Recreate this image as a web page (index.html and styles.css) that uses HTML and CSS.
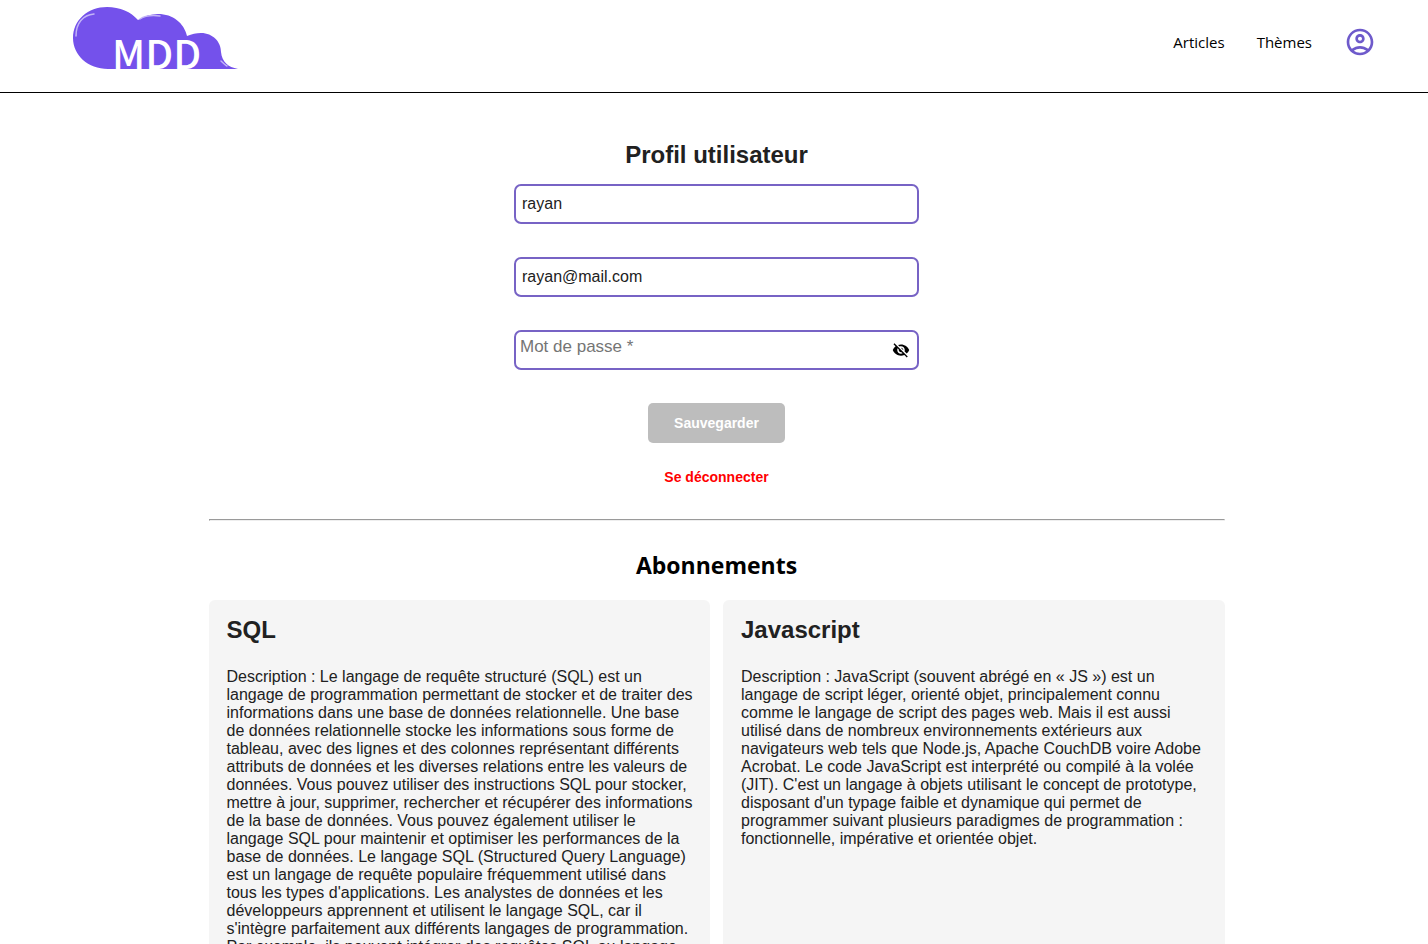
FILE: index.html
```html
<!DOCTYPE html>
<html lang="fr">
<head>
  <meta charset="utf-8">
  <meta name="viewport" content="width=device-width, initial-scale=1">
  <title>MDD</title>
  <link rel="stylesheet" href="styles.css">
</head>
<body>
  <header class="header">
    <a class="logo" href="#" aria-label="MDD">
      <svg width="168" height="78" viewBox="0 0 168 78">
        <path fill="#7451eb" d="M36 63C16 63 1 49 1 32 1 14 16 1 35 1 48 1 59 6 66 14 72 10 79 8 86 8 101 8 112 17 115 30 120 28 124 27 129 27 141 27 149 36 149 46 150 56 156 61 166 63Z"/>
        <path fill="none" stroke="#c3b4f7" stroke-width="1.500" stroke-linecap="round" d="M4 30C4 17 11 9 22 8M68 13C74 9 80 9 88 10M149 55C151 57 153 59 155 60"/>
        <text class="logo-text" x="40" y="63" fill="#fff">MDD</text>
      </svg>
    </a>
    <nav class="nav">
      <a href="#">Articles</a>
      <a href="#">Thèmes</a>
      <a class="account" href="#" aria-label="Profil">
        <svg width="32" height="32" viewBox="0 0 24 24" fill="#6e5acb"><path d="M12 2C6.48 2 2 6.48 2 12s4.480 10 10 10 10-4.480 10-10S17.520 2 12 2zM7.350 18.500C8.660 17.560 10.260 17 12 17s3.340.560 4.650 1.500C15.340 19.440 13.740 20 12 20s-3.340-.560-4.650-1.500zm10.790-1.380C16.450 15.800 14.320 15 12 15s-4.450.800-6.140 2.120C4.700 15.730 4 13.950 4 12c0-4.420 3.580-8 8-8s8 3.580 8 8c0 1.950-.700 3.730-1.860 5.120zM12 6c-1.930 0-3.500 1.570-3.500 3.500S10.070 13 12 13s3.500-1.570 3.500-3.500S13.930 6 12 6zm0 5c-.830 0-1.500-.670-1.500-1.500S11.170 8 12 8s1.500.670 1.500 1.500S12.830 11 12 11z"/></svg>
      </a>
    </nav>
  </header>
  <main class="main">
    <form class="profile">
      <h1 class="title">Profil utilisateur</h1>
      <input class="field" type="text" aria-label="Nom d'utilisateur" value="rayan">
      <input class="field" type="email" aria-label="E-mail" value="rayan@mail.com">
      <div class="field password">
        <input type="password" aria-label="Mot de passe" placeholder="Mot de passe *">
        <button class="eye" type="button" aria-label="Afficher le mot de passe">
          <svg width="18" height="18" viewBox="0 0 24 24"><path d="M12 7c2.760 0 5 2.240 5 5 0 .650-.130 1.260-.360 1.830l2.920 2.920c1.510-1.260 2.700-2.890 3.430-4.750-1.730-4.390-6-7.500-11-7.500-1.400 0-2.740.250-3.980.700l2.160 2.160C10.740 7.130 11.350 7 12 7zM2 4.270l2.280 2.280.460.460C3.080 8.300 1.780 10.020 1 12c1.730 4.390 6 7.500 11 7.500 1.550 0 3.030-.300 4.380-.840l.420.420L19.730 22 21 20.730 3.270 3 2 4.270zM7.530 9.800l1.550 1.550c-.050.210-.080.430-.080.650 0 1.660 1.340 3 3 3 .220 0 .440-.030.650-.080l1.550 1.550c-.670.330-1.410.530-2.200.530-2.760 0-5-2.240-5-5 0-.790.200-1.530.530-2.200zm4.310-.780l3.150 3.150.020-.160c0-1.660-1.340-3-3-3l-.170.010z"/></svg>
        </button>
      </div>
      <button class="save" type="submit" disabled>Sauvegarder</button>
      <button class="logout" type="button">Se déconnecter</button>
    </form>
    <hr class="rule">
    <h2 class="section-title">Abonnements</h2>
    <section class="cards">
      <article class="card">
        <h2 class="title">SQL</h2>
        <p>Description : Le langage de requête structuré (SQL) est un langage de programmation permettant de stocker et de traiter des informations dans une base de données relationnelle. Une base de données relationnelle stocke les informations sous forme de tableau, avec des lignes et des colonnes représentant différents attributs de données et les diverses relations entre les valeurs de données. Vous pouvez utiliser des instructions SQL pour stocker, mettre à jour, supprimer, rechercher et récupérer des informations de la base de données. Vous pouvez également utiliser le langage SQL pour maintenir et optimiser les performances de la base de données. Le langage SQL (Structured Query Language) est un langage de requête populaire fréquemment utilisé dans tous les types d'applications. Les analystes de données et les développeurs apprennent et utilisent le langage SQL, car il s'intègre parfaitement aux différents langages de programmation. Par exemple, ils peuvent intégrer des requêtes SQL au langage</p>
      </article>
      <article class="card">
        <h2 class="title">Javascript</h2>
        <p>Description : JavaScript (souvent abrégé en « JS ») est un langage de script léger, orienté objet, principalement connu comme le langage de script des pages web. Mais il est aussi utilisé dans de nombreux environnements extérieurs aux navigateurs web tels que Node.js, Apache CouchDB voire Adobe Acrobat. Le code JavaScript est interprété ou compilé à la volée (JIT). C'est un langage à objets utilisant le concept de prototype, disposant d'un typage faible et dynamique qui permet de programmer suivant plusieurs paradigmes de programmation : fonctionnelle, impérative et orientée objet.</p>
      </article>
    </section>
  </main>
</body>
</html>
```
FILE: styles.css
```css
* {
  box-sizing: border-box;
}

body {
  margin: 0;
  background: #fff;
  color: #212121;
  font: 16px/18px "Liberation Sans", Arial, sans-serif;
}

.header {
  display: flex;
  justify-content: space-between;
  align-items: flex-start;
  height: 93px;
  padding: 6px 52px 0 72px;
  border-bottom: 1px solid #000;
}

.logo svg {
  display: block;
}

.logo-text {
  font: 500 40px "Noto Sans CJK SC", sans-serif;
}

.nav {
  display: flex;
  align-items: center;
  gap: 32px;
  padding-top: 20px;
}

.nav a {
  color: #000;
  font: 15px/20px "Open Sans", sans-serif;
  text-decoration: none;
}

.nav svg {
  display: block;
}

.main {
  display: flex;
  flex-direction: column;
  align-items: center;
  padding: 46px 0 16px 5px;
}

.profile {
  display: flex;
  flex-direction: column;
  align-items: center;
  width: 100%;
}

.title {
  margin: 0;
  color: #212121;
  font-size: 24px;
  line-height: 32px;
}

.profile .title {
  margin-bottom: 13px;
}

.field {
  width: 405px;
  max-width: 100%;
  height: 40px;
  margin-bottom: 33px;
  padding: 0 6px;
  border: 2px solid #7763c5;
  border-radius: 7px;
  background: #fff;
  color: #212121;
  font: inherit;
}

.password {
  display: flex;
  align-items: center;
  padding: 0 7px 0 4px;
}

.password input {
  flex: 1;
  min-width: 0;
  height: 32px;
  padding: 0 0 6px;
  border: 0;
  outline: 0;
  background: none;
  font: inherit;
  font-size: 17px;
}

.password input::placeholder {
  color: #757575;
}

.eye {
  display: flex;
  padding: 0;
  border: 0;
  background: none;
}

.save {
  width: 137px;
  height: 40px;
  border: 0;
  border-radius: 5px;
  background: #bdbdbd;
  color: #fff;
  font: bold 14px/16px "Liberation Sans", Arial, sans-serif;
}

.logout {
  margin-top: 26px;
  padding: 0;
  border: 0;
  background: none;
  color: #f00;
  font: bold 14px/16px "Liberation Sans", Arial, sans-serif;
}

.rule {
  width: 1016px;
  max-width: 100%;
  margin: 34px 0 28px;
}

.section-title {
  margin: 0 0 19px;
  color: #000;
  font: bold 23px/32px "Open Sans", sans-serif;
}

.cards {
  display: grid;
  grid-template-columns: 1fr 1fr;
  gap: 13px;
  width: 1016px;
  max-width: 100%;
}

.card {
  padding: 14px 16px 14px 18px;
  border-radius: 6px;
  background: #f5f5f5;
}

.card p {
  margin: 22px 0 0;
}
```
